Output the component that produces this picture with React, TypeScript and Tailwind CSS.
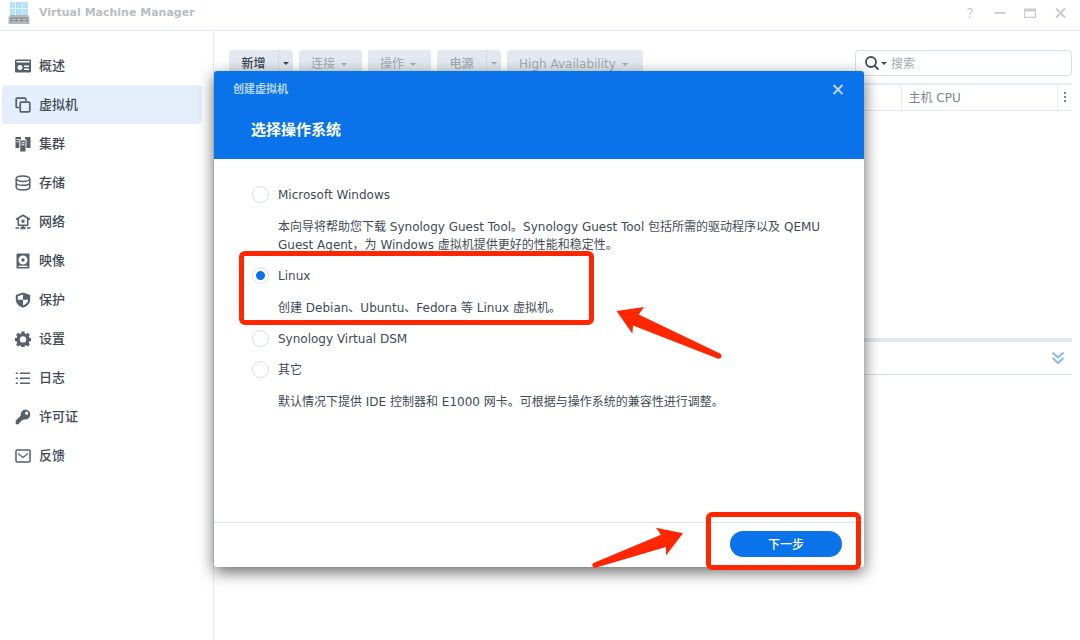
import { useState, type ReactNode } from 'react';
import clsx from 'clsx';

const NAV: { key: string; label: string; icon: ReactNode }[] = [
  {
    key: 'overview',
    label: '概述',
    icon: (
      <path fillRule="evenodd" d="M1 1.5h14a1 1 0 0 1 1 1v11a1 1 0 0 1-1 1H1a1 1 0 0 1-1-1v-11a1 1 0 0 1 1-1zM1.5 3v1.5h13V3zM5 7a2.5 2.5 0 1 0 0 5 2.5 2.5 0 0 0 0-5zM9 7.5V9h5V7.500zM9 10.500V12h5v-1.500z" />
    ),
  },
  {
    key: 'vm',
    label: '虚拟机',
    icon: (
      <g fill="none" stroke="currentColor" strokeWidth="1.7">
        <path d="M4.200 10.500H2a.8.8 0 0 1-.8-.8V2a.8.8 0 0 1 .8-.8h8a.8.8 0 0 1 .8.8v2" />
        <rect x="5.200" y="5.200" width="9.600" height="9.600" rx="1" />
      </g>
    ),
  },
  {
    key: 'cluster',
    label: '集群',
    icon: (
      <path fillRule="evenodd" d="M.500 1h5.500v2.500H4.300V12H.500zM1.500 3v1H4V3zM1.500 5.200v1h2v-1zM10 1h5.500v11h-4.100V3.500H10zM5.300 4.500h5.200V15.500H5.300zM6.400 6.200v1h3v-1zM6.400 8.300v1h3v-1z" />
    ),
  },
  {
    key: 'storage',
    label: '存储',
    icon: (
      <g fill="none" stroke="currentColor" strokeWidth="1.5">
        <ellipse cx="8" cy="3.700" rx="6.800" ry="2.700" />
        <path d="M1.200 3.700v8.600C1.200 13.900 4.200 15 8 15s6.800-1.100 6.800-2.700V3.700M1.200 8c0 1.500 3 2.300 6.800 2.300s6.800-.8 6.800-2.300" />
      </g>
    ),
  },
  {
    key: 'network',
    label: '网络',
    icon: (
      <g>
        <path fill="none" stroke="currentColor" strokeWidth="1.6" strokeLinejoin="round" d="M1 5.500 8 1.300l7 4.200M3.300 5v6.300h9.400V5" />
        <path d="M6.500 5.800h3v3h-3zM7.200 11h1.600v2H7.200zM.500 13.200h3.500v1.600H.500zM5.500 12.700h5v2.600h-5zM12 13.200h3.500v1.600H12z" />
      </g>
    ),
  },
  {
    key: 'image',
    label: '映像',
    icon: (
      <path fillRule="evenodd" d="M2.500.500h11a1 1 0 0 1 1 1v13a1 1 0 0 1-1 1h-11a1 1 0 0 1-1-1v-13a1 1 0 0 1 1-1zM8 2.500a4.500 4.500 0 1 0 0 9 4.500 4.500 0 0 0 0-9zM8 5.300a1.700 1.700 0 1 1 0 3.400 1.700 1.700 0 0 1 0-3.400zM3.500 12.700v1.200h9v-1.200z" />
    ),
  },
  {
    key: 'protect',
    label: '保护',
    icon: (
      <path fillRule="evenodd" d="M8 .500 15.200 3v4.500c0 4-3 6.800-7.200 8.200C3.800 14.300.800 11.500.800 7.500V3zM8 2.600 2.800 4.300V7.800H8zM8 7.800v5.700c2.800-1 5-3 5.200-5.700z" />
    ),
  },
  {
    key: 'settings',
    label: '设置',
    icon: (
      <path fillRule="evenodd" d="M6.500.500h3l.4 2 1.200.5 1.700-1.200 2.100 2.100-1.200 1.700.5 1.200 1.800.3v3l-1.800.4-.5 1.200 1.200 1.700-2.100 2.100-1.700-1.200-1.200.5-.4 1.700h-3l-.4-1.700-1.200-.5-1.700 1.200-2.100-2.100 1.200-1.700-.5-1.200L0 10.100v-3l1.800-.3.500-1.200-1.200-1.700 2.100-2.100L4.900 3l1.200-.5zM8 5.200a3.200 3.200 0 1 0 0 6.400 3.200 3.200 0 0 0 0-6.400z" />
    ),
  },
  {
    key: 'log',
    label: '日志',
    icon: (
      <path d="M.800 2.500h2V4h-2zM5 2.500h10V4H5zM.800 7.500h2V9h-2zM5 7.500h10V9H5zM.800 12.500h2V14h-2zM5 12.500h10V14H5z" />
    ),
  },
  {
    key: 'license',
    label: '许可证',
    icon: (
      <path fillRule="evenodd" d="M10.500.500a5 5 0 1 1-1.600 9.800L7.700 11.500H6v1.800H4.300v2H.700v-3.600l5.100-5.100A5 5 0 0 1 10.500.500zM11.700 2.600a1.600 1.600 0 1 0 0 3.200 1.600 1.600 0 0 0 0-3.200z" />
    ),
  },
  {
    key: 'feedback',
    label: '反馈',
    icon: (
      <g fill="none" stroke="currentColor" strokeWidth="1.500" strokeLinejoin="round">
        <rect x="1" y="2" width="14" height="12" rx="1" />
        <path strokeWidth="1.200" d="M3 5.500 8 9.500l5-4" />
      </g>
    ),
  },
];

const SYSTEMS = [
  {
    key: 'windows',
    label: 'Microsoft Windows',
    desc: '本向导将帮助您下载 Synology Guest Tool。Synology Guest Tool 包括所需的驱动程序以及 QEMU Guest Agent，为 Windows 虚拟机提供更好的性能和稳定性。',
  },
  { key: 'linux', label: 'Linux', desc: '创建 Debian、Ubuntu、Fedora 等 Linux 虚拟机。' },
  { key: 'vdsm', label: 'Synology Virtual DSM' },
  { key: 'other', label: '其它', desc: '默认情况下提供 IDE 控制器和 E1000 网卡。可根据与操作系统的兼容性进行调整。' },
];

function Caret() {
  return (
    <svg className="w-1.5 h-[3px] shrink-0" viewBox="0 0 6 3" fill="currentColor">
      <path d="M0 0h6L3 3z" />
    </svg>
  );
}

function Logo() {
  return (
    <svg className="w-[22px] h-[22px]" viewBox="0 0 22 22">
      <path d="M2 0h18v13H2z" fill="#a5d3ea" />
      <path d="M2 0h5v6H2zM8.500 0h5v6h-5zM15 0h5v6h-5zM2 7h5v6H2zM8.500 7h5v6h-5zM15 7h5v6h-5z" fill="#b5e3f6" />
      <path d="M7.500 0v13M14.300 0v13M2 6.500h18" stroke="#e3f4fb" strokeWidth="1" />
      <path d="M2 13h18l1.500 2.500V22H.500v-6.500z" fill="#b4b8bb" />
      <path d="M2.500 15.500h17V20h-17z" fill="#8d9394" />
      <path d="M4 17h3.500v1H4zM9.200 17h3.500v1H9.200zM14.500 17H18v1h-3.500zM4 19h3.500v.7H4zM9.200 19h3.500v.7H9.200zM14.500 19H18v.7h-3.500z" fill="#c9d3bd" />
    </svg>
  );
}

function ToolButton({ label, split, active }: { label: string; split?: boolean; active?: boolean }) {
  const color = active ? 'text-[#3c464f]' : 'text-[#a3a9b0]';
  if (split) {
    return (
      <div className={clsx('flex h-[26px] rounded-[3px] bg-[#e4e9f1]', color)}>
        <button disabled={!active} className="w-[49px] pt-0.5 text-center font-medium">{label}</button>
        <button disabled={!active} aria-label={`${label} ▾`} className="w-[15px] flex items-center justify-center border-l border-[#cfdae6]">
          <Caret />
        </button>
      </div>
    );
  }
  return (
    <button disabled={!active} className={clsx('h-[26px] pt-0.5 pl-3 pr-[15px] flex items-center gap-1.5 rounded-[3px] bg-[#e4e9f1] whitespace-nowrap', color)}>
      {label}
      <Caret />
    </button>
  );
}

function WindowControls() {
  return (
    <div className="flex items-center gap-3.5 text-[#c8cccf]">
      <button aria-label="?" className="size-4 text-sm leading-4 font-medium">?</button>
      <button aria-label="−" className="size-4">
        <svg viewBox="0 0 16 16" fill="currentColor"><path d="M2.500 7h11v1.800h-11z" /></svg>
      </button>
      <button aria-label="□" className="size-4">
        <svg viewBox="0 0 16 16" fill="currentColor" fillRule="evenodd">
          <path d="M2 3.500h12v9.500H2zM3.200 6.500v5.300h9.600V6.500z" />
        </svg>
      </button>
      <button aria-label="×" className="size-4">
        <svg viewBox="0 0 16 16" fill="none" stroke="currentColor" strokeWidth="2"><path d="m4 3.500 9 9m0-9-9 9" /></svg>
      </button>
    </div>
  );
}

function CreateDialog() {
  const [system, setSystem] = useState('linux');

  return (
    <section role="dialog" className="relative w-[650px] rounded-[3px] bg-white shadow-[0_5px_16px_rgba(0,0,0,0.6)]">
      <header className="h-[88px] rounded-t-[3px] bg-[#0a73e9]">
        <div className="flex items-center justify-between pl-[19px] pr-[18px] pt-[11px]">
          <span className="text-[11px] leading-4 font-bold text-[#b5d5f8]">创建虚拟机</span>
          <button aria-label="×" className="size-4 text-[#b5d5f8]">
            <svg viewBox="0 0 16 16" fill="none" stroke="currentColor" strokeWidth="2"><path d="m3.500 3 9 9m0-9-9 9" /></svg>
          </button>
        </div>
        <h1 className="mt-5 pl-[37px] text-[15px] leading-6 font-bold text-white">选择操作系统</h1>
      </header>

      <form className="min-h-[363px] pt-[27px] pl-[38px] pr-7 space-y-[13px]">
        {SYSTEMS.map(s => (
          <div key={s.key} className="relative">
            <label className="flex items-start gap-[9px] leading-[18px]">
              <input
                type="radio"
                name="system"
                checked={system === s.key}
                onChange={() => setSystem(s.key)}
                className="appearance-none size-[17px] rounded-full border border-[#d5e0ec] bg-white checked:bg-[radial-gradient(circle,#0a73e9_0,#0a73e9_4px,#ffffff_5px)]"
              />
              {s.label}
            </label>
            {s.desc && <p className="mt-3.5 pl-[26px] leading-[18px]">{s.desc}</p>}
            {s.key === 'linux' && (
              <div className="absolute -left-[13px] -top-4 -bottom-2 w-[355px] rounded-md border-[5px] border-[#ff2600] pointer-events-none" />
            )}
          </div>
        ))}
      </form>

      <footer className="h-[45px] pb-0.5 border-t border-[#dce5ee] flex items-center justify-end pr-[22px]">
        <div className="relative">
          <button className="block w-28 h-[26px] pt-0.5 rounded-full bg-[#0a73e9] text-white font-medium">下一步</button>
          <div className="absolute -left-6 -right-[19px] -top-[19px] -bottom-[13px] rounded-md border-[5px] border-[#ff2600] pointer-events-none" />
        </div>
      </footer>

      {/* pointers */}
      <svg className="absolute left-[402px] top-[235px] w-[107px] h-[55px] pointer-events-none" viewBox="616 306 107 55" fill="#ff2600">
        <path d="M616.500 311 644 307l-5.300 7.500 81.300 39q2 1.500 1.500 3.300-.8 2.200-3.300 2L633 325.500l-.6 8.200z" />
      </svg>
      <svg className="absolute left-[378px] top-[456px] w-[92px] h-[42px] pointer-events-none" viewBox="592 527 92 42" fill="#ff2600">
        <path d="M683 533.300 656 527.700l5 7.100-67.500 28.200q-1.500 1-1.200 2.900.9 2.100 3.200 1.900L666 547v8.500z" />
      </svg>
    </section>
  );
}

export default function App() {
  const [page, setPage] = useState('vm');

  return (
    <div className="relative min-h-screen flex flex-col overflow-hidden bg-white text-xs text-[#414b55] font-['DejaVu_Sans','Noto_Sans_CJK_SC',sans-serif]">
      <header className="h-[31px] pl-2 pr-3 pb-1 flex items-center justify-between border-b border-[#e3eaf1]">
        <div className="flex items-center gap-[9px]">
          <Logo />
          <span className="text-[11px] font-bold text-[#b9bdc1]">Virtual Machine Manager</span>
        </div>
        <WindowControls />
      </header>

      <div className="flex-1 flex">
        <nav className="w-[214px] shrink-0 border-r border-[#e3eaf1] pt-[15px] pl-0.5 pr-[11px]">
          {NAV.map(item => (
            <button
              key={item.key}
              onClick={() => setPage(item.key)}
              className={clsx(
                'w-full h-[39px] pl-[13px] flex items-center gap-2 rounded text-[13px] font-medium',
                page === item.key && 'bg-[#e5effc]',
              )}
            >
              <svg className="size-4 text-[#56616c]" viewBox="0 0 16 16" fill="currentColor">{item.icon}</svg>
              {item.label}
            </button>
          ))}
        </nav>

        <main className="flex-1 min-w-0 pl-[15px] pr-2">
          <div className="flex items-center justify-between pt-[19px]">
            <div className="flex gap-1.5">
              <ToolButton label="新增" split active />
              <ToolButton label="连接" />
              <ToolButton label="操作" />
              <ToolButton label="电源" split />
              <ToolButton label="High Availability" />
            </div>
            <div className="w-[217px] h-[26px] px-[9px] flex items-center gap-1 rounded border border-[#d3dfe9]">
              <button aria-label="搜索 ▾" className="flex items-center gap-0.5 text-[#414b55]">
                <svg className="size-3.5" viewBox="0 0 14 14" fill="none" stroke="currentColor" strokeWidth="1.800">
                  <circle cx="6" cy="6" r="5" />
                  <path d="m9.500 9.500 4 4" />
                </svg>
                <Caret />
              </button>
              <input aria-label="搜索" placeholder="搜索" className="w-full min-w-0 pt-0.5 outline-none placeholder:text-[#a3a9b0]" />
            </div>
          </div>

          <div className="mt-[7px] h-[255px] border-t-2 border-[#e6edf3]">
            <table className="w-full table-fixed border-b border-[#e3eaf1] text-[#7c858e]">
              <thead>
                <tr className="h-[25px]">
                  <th />
                  <th className="w-[156px] pt-0.5 pl-[7px] border-l border-[#e3eaf1] text-left font-normal">主机 CPU</th>
                  <th className="w-[15px] border-l border-[#e3eaf1]">
                    <svg className="mx-auto w-0.5 h-2.5" viewBox="0 0 2 10" fill="currentColor">
                      <path d="M0 0h2v2H0zM0 4h2v2H0zM0 8h2v2H0z" />
                    </svg>
                  </th>
                </tr>
              </thead>
            </table>
          </div>

          <div className="h-[37px] pr-[7px] flex items-center justify-end border-t-4 border-b border-t-[#e1e8ef] border-b-[#d3dfe9]">
            <button aria-label="︾" className="text-[#85b8f2]">
              <svg className="w-3.5 h-3.5" viewBox="0 0 14 14" fill="none" stroke="currentColor" strokeWidth="1.800">
                <path d="m1.500 1.500 5.500 5 5.500-5M1.500 7l5.500 5L12.500 7" />
              </svg>
            </button>
          </div>
        </main>
      </div>

      <div className="absolute inset-0 pr-0.5 pb-0.5 flex items-center justify-center">
        <CreateDialog />
      </div>
    </div>
  );
}
